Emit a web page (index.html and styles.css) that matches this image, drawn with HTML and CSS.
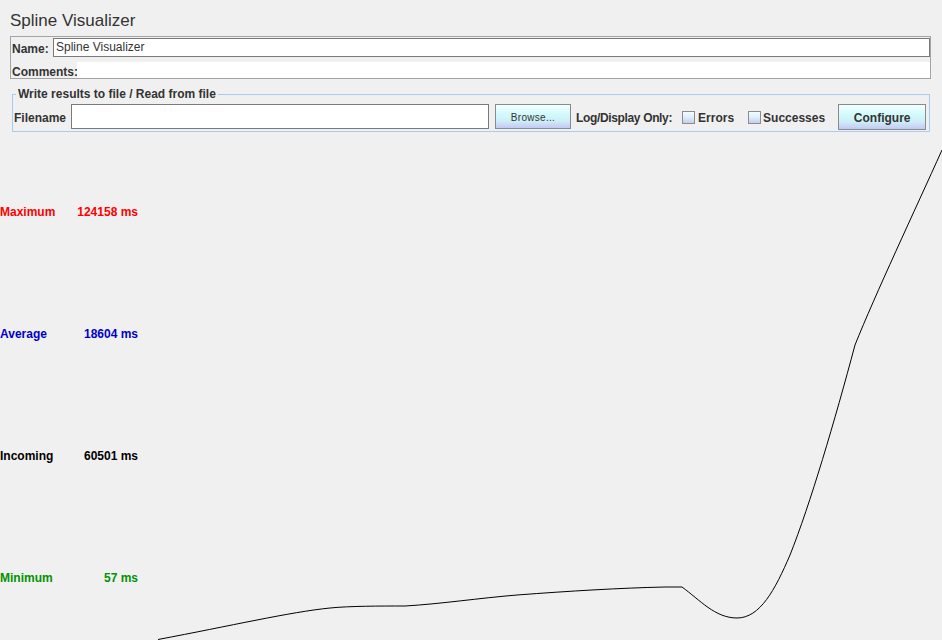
FILE: index.html
```html
<!DOCTYPE html>
<html>
<head>
<meta charset="utf-8">
<title>Spline Visualizer</title>
<link rel="stylesheet" href="styles.css">
</head>
<body>
<div class="page">
  <header class="header">
    <h1 class="title">Spline Visualizer</h1>
    <div class="name-panel">
      <div class="row name-row">
        <span class="lbl">Name:</span>
        <div class="text-input name-input">Spline Visualizer</div>
      </div>
      <div class="row comments-row">
        <span class="lbl">Comments:</span>
        <div class="comments-field"></div>
      </div>
    </div>
    <fieldset class="file-box">
      <legend class="file-legend">Write results to file / Read from file</legend>
      <div class="file-row">
        <span class="lbl filename-lbl">Filename</span>
        <div class="text-input file-input"></div>
        <button class="jbtn browse">Browse...</button>
        <span class="lbl log-lbl">Log/Display Only:</span>
        <span class="check"></span>
        <span class="lbl check-lbl">Errors</span>
        <span class="check check-2"></span>
        <span class="lbl check-lbl">Successes</span>
        <button class="jbtn configure">Configure</button>
      </div>
    </fieldset>
  </header>
  <div class="chart">
    <div class="stats">
      <div class="stat max"><span>Maximum</span><span>124158 ms</span></div>
      <div class="stat avg"><span>Average</span><span>18604 ms</span></div>
      <div class="stat inc"><span>Incoming</span><span>60501 ms</span></div>
      <div class="stat min"><span>Minimum</span><span>57 ms</span></div>
    </div>
    <svg class="plot" viewBox="140 140 802 500" width="802" height="500">
      <path fill="none" stroke="#000" stroke-width="1"
        d="M158,639.5 C230,626 290,612 330,608 C350,606 380,606 405,606 C440,604 480,598 517,595 C570,591 620,588 665,587 L682,587 C700,600 715,618 737,618 C760,618 775,590 790,555 C810,505 835,420 855,345 C875,295 915,210 942,150"/>
    </svg>
  </div>
</div>
</body>
</html>
```

FILE: styles.css
```css
html, body {
  margin: 0;
  padding: 0;
  background: #f0f0f0;
}

body {
  width: 942px;
  height: 640px;
  overflow: hidden;
  font-family: "Liberation Sans", Arial, sans-serif;
  color: #333333;
}

.page {
  display: flex;
  flex-direction: column;
}

.header {
  height: 140px;
  display: flex;
  flex-direction: column;
}

.title {
  margin: 0;
  padding: 11px 0 0 10px;
  height: 25px;
  font-size: 17px;
  font-weight: normal;
  line-height: 20px;
  color: #333333;
}

.name-panel {
  margin-left: 10px;
  width: 919px;
  height: 41px;
  border: 1px solid #a4a4a4;
  display: flex;
  flex-direction: column;
}

.row {
  display: flex;
  align-items: center;
}

.lbl {
  font-size: 12px;
  font-weight: bold;
  color: #333333;
  white-space: nowrap;
}

.name-row {
  height: 21px;
  padding-left: 1px;
}

.name-row .lbl {
  width: 41px;
  padding-top: 2px;
}

.text-input {
  background: #ffffff;
  border: 1px solid #7a7a7a;
  box-sizing: border-box;
}

.name-input {
  width: 877px;
  height: 19px;
  font-size: 12px;
  line-height: 17px;
  padding-left: 2px;
  color: #333333;
}

.comments-row {
  height: 16px;
  margin-top: 4px;
  padding-left: 1px;
}

.comments-row .lbl {
  width: 65px;
  padding-top: 4px;
}

.comments-field {
  background: #ffffff;
  width: 853px;
  height: 16px;
}

.file-box {
  margin: 8px 0 0 12px;
  padding: 0 0 1px 0;
  width: 916px;
  border: 1px solid #a9cbec;
  min-width: 0;
}

.file-legend {
  margin-left: 3px;
  padding: 0 2px;
  font-size: 12px;
  font-weight: bold;
  color: #333333;
  line-height: 14px;
}

.file-row {
  display: flex;
  align-items: center;
  height: 26px;
  padding: 3px 0 0 1px;
}

.file-row .lbl {
  padding-top: 1px;
}

.filename-lbl {
  width: 57px;
}

.file-input {
  width: 418px;
  height: 25px;
  align-self: flex-start;
}

.jbtn {
  font-family: "Liberation Sans", Arial, sans-serif;
  border: 1px solid #8a8a8a;
  background: linear-gradient(#f4ffff 0%, #d2fafc 40%, #cdeef7 70%, #c6c8f2 100%);
  color: #333333;
  padding: 2px 0 0 0;
  box-sizing: border-box;
}

.browse {
  margin-left: 6px;
  width: 76px;
  height: 25px;
  font-size: 10px;
  letter-spacing: 0.3px;
  align-self: flex-start;
}

.log-lbl {
  margin-left: 5px;
  letter-spacing: -0.35px;
}

.check {
  display: inline-block;
  width: 13px;
  height: 13px;
  box-sizing: border-box;
  border: 1px solid #8c8c8c;
  background: linear-gradient(#f4fcff 0%, #d8f0fa 50%, #c9cbef 100%);
  margin-left: 10px;
  margin-right: 3px;
}

.check-2 {
  margin-left: 14px;
  margin-right: 2px;
}

.configure {
  margin-left: 13px;
  width: 88px;
  height: 26px;
  font-size: 12px;
  font-weight: bold;
}

.chart {
  position: relative;
  height: 500px;
  display: flex;
}

.stats {
  width: 140px;
  display: flex;
  flex-direction: column;
  gap: 108px;
  padding-top: 65px;
}

.stat {
  display: flex;
  justify-content: space-between;
  width: 138px;
  font-size: 12px;
  font-weight: bold;
  line-height: 14px;
}

.max { color: #ff0000; }
.avg { color: #0000c8; }
.inc { color: #000000; }
.min { color: #009300; }

.plot {
  position: absolute;
  left: 140px;
  top: 0;
  overflow: visible;
}
```
